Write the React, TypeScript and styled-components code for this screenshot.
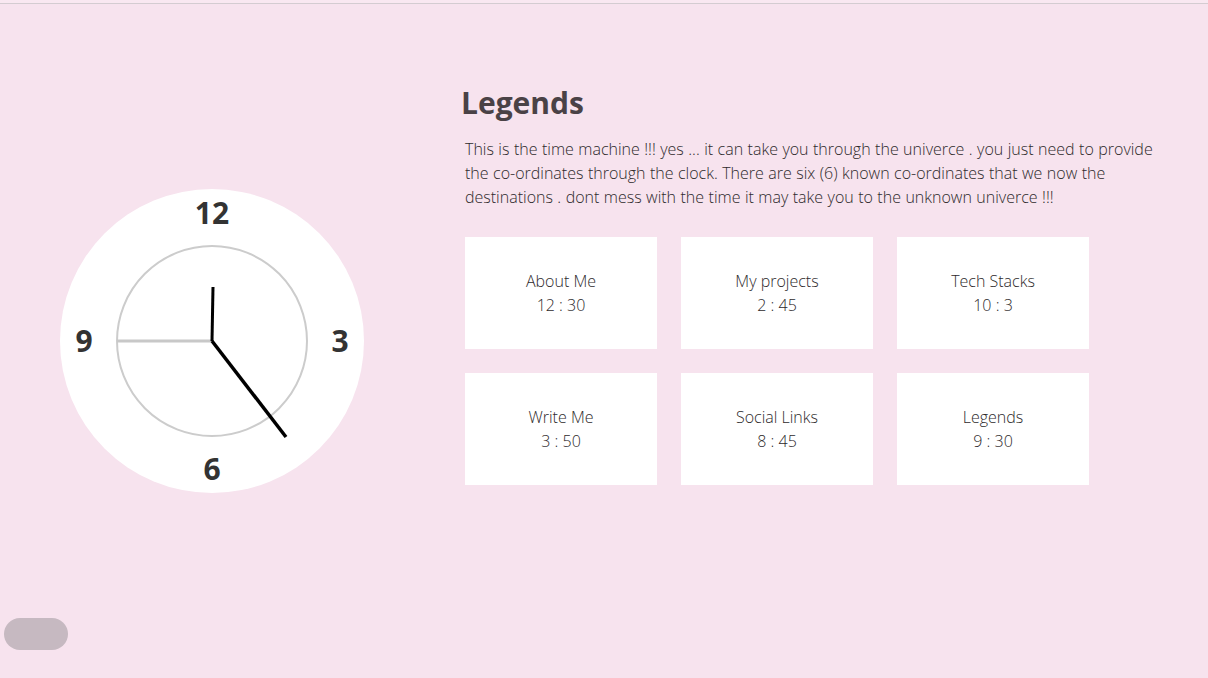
import React from "react";
import styled, { createGlobalStyle } from "styled-components";

const GlobalStyle = createGlobalStyle`
  html, body { margin: 0; padding: 0; }
  body {
    background: #f7e3ee;
    font-family: "Open Sans", "Noto Sans", sans-serif;
    color: #333;
    overflow: hidden;
  }
`;

const Page = styled.div`
  width: 1208px;
  height: 678px;
  position: relative;
  background: #f7e3ee;
`;

const TopRule = styled.div`
  height: 3px;
  background: #f9e8f1;
  border-bottom: 1px solid #d4ccd1;
`;

const Main = styled.main`
  display: flex;
  align-items: flex-start;
  padding: 77px 0 0 60px;
`;

const ClockColumn = styled.div`
  padding-top: 108px;
  margin-right: 97px;
`;

const Face = styled.div`
  position: relative;
  width: 304px;
  height: 304px;
  border-radius: 50%;
  background: #fff;
`;

const Dial = styled.svg`
  display: block;
  width: 304px;
  height: 304px;
`;

const Numeral = styled.span<{ $x: number; $y: number }>`
  position: absolute;
  left: ${(p) => p.$x}px;
  top: ${(p) => p.$y}px;
  transform: translate(-50%, -50%);
  font-size: 30px;
  font-weight: 700;
  line-height: 1;
  color: #333;
`;

const Content = styled.section`
  display: flex;
  flex-direction: column;
  width: 700px;
`;

const Title = styled.h1`
  margin: 0;
  font-size: 30px;
  font-weight: 700;
  line-height: 44px;
  color: #4a4246;
`;

const Text = styled.p`
  margin: 12px 0 0 4px;
  font-size: 16px;
  font-weight: 300;
  line-height: 24px;
  word-spacing: 0.3px;
  color: #2e2a2c;
`;

const Grid = styled.div`
  display: grid;
  grid-template-columns: repeat(3, 192px);
  grid-auto-rows: 112px;
  gap: 24px;
  margin: 28px 0 0 4px;
`;

const Card = styled.div`
  background: #fff;
  display: flex;
  flex-direction: column;
  align-items: center;
  justify-content: center;
  font-size: 16px;
  font-weight: 300;
  line-height: 24px;
  color: #2e2a2c;
`;

const Toggle = styled.button`
  position: absolute;
  left: 4px;
  top: 618px;
  width: 64px;
  height: 32px;
  border: none;
  border-radius: 16px;
  background: #c6b9c1;
  padding: 0;
`;

const legends = [
  { name: "About Me", time: "12 : 30" },
  { name: "My projects", time: "2 : 45" },
  { name: "Tech Stacks", time: "10 : 3" },
  { name: "Write Me", time: "3 : 50" },
  { name: "Social Links", time: "8 : 45" },
  { name: "Legends", time: "9 : 30" },
];

const numerals = [
  { label: "12", x: 152, y: 24 },
  { label: "3", x: 280, y: 152 },
  { label: "6", x: 152, y: 280 },
  { label: "9", x: 24, y: 152 },
];

export default function App() {
  return (
    <>
      <GlobalStyle />
      <Page>
        <TopRule />
        <Main>
          <ClockColumn>
            <Face>
              <Dial viewBox="0 0 304 304">
                <circle cx="152" cy="152" r="95" fill="none" stroke="#cccccc" strokeWidth="2" />
                <line x1="152" y1="152" x2="57" y2="152" stroke="#c8c8c8" strokeWidth="3" />
                <line x1="152" y1="152" x2="153" y2="98" stroke="#000" strokeWidth="3" />
                <line x1="152" y1="152" x2="226" y2="248" stroke="#000" strokeWidth="3.5" />
              </Dial>
              {numerals.map((n) => (
                <Numeral key={n.label} $x={n.x} $y={n.y}>
                  {n.label}
                </Numeral>
              ))}
            </Face>
          </ClockColumn>
          <Content>
            <Title>Legends</Title>
            <Text>
              This is the time machine !!! yes ... it can take you through the univerce . you just need to provide the
              co-ordinates through the clock. There are six (6) known co-ordinates that we now the destinations . dont
              mess with the time it may take you to the unknown univerce !!!
            </Text>
            <Grid>
              {legends.map((l) => (
                <Card key={l.name}>
                  <span>{l.name}</span>
                  <span>{l.time}</span>
                </Card>
              ))}
            </Grid>
          </Content>
        </Main>
        <Toggle aria-label="toggle" />
      </Page>
    </>
  );
}
